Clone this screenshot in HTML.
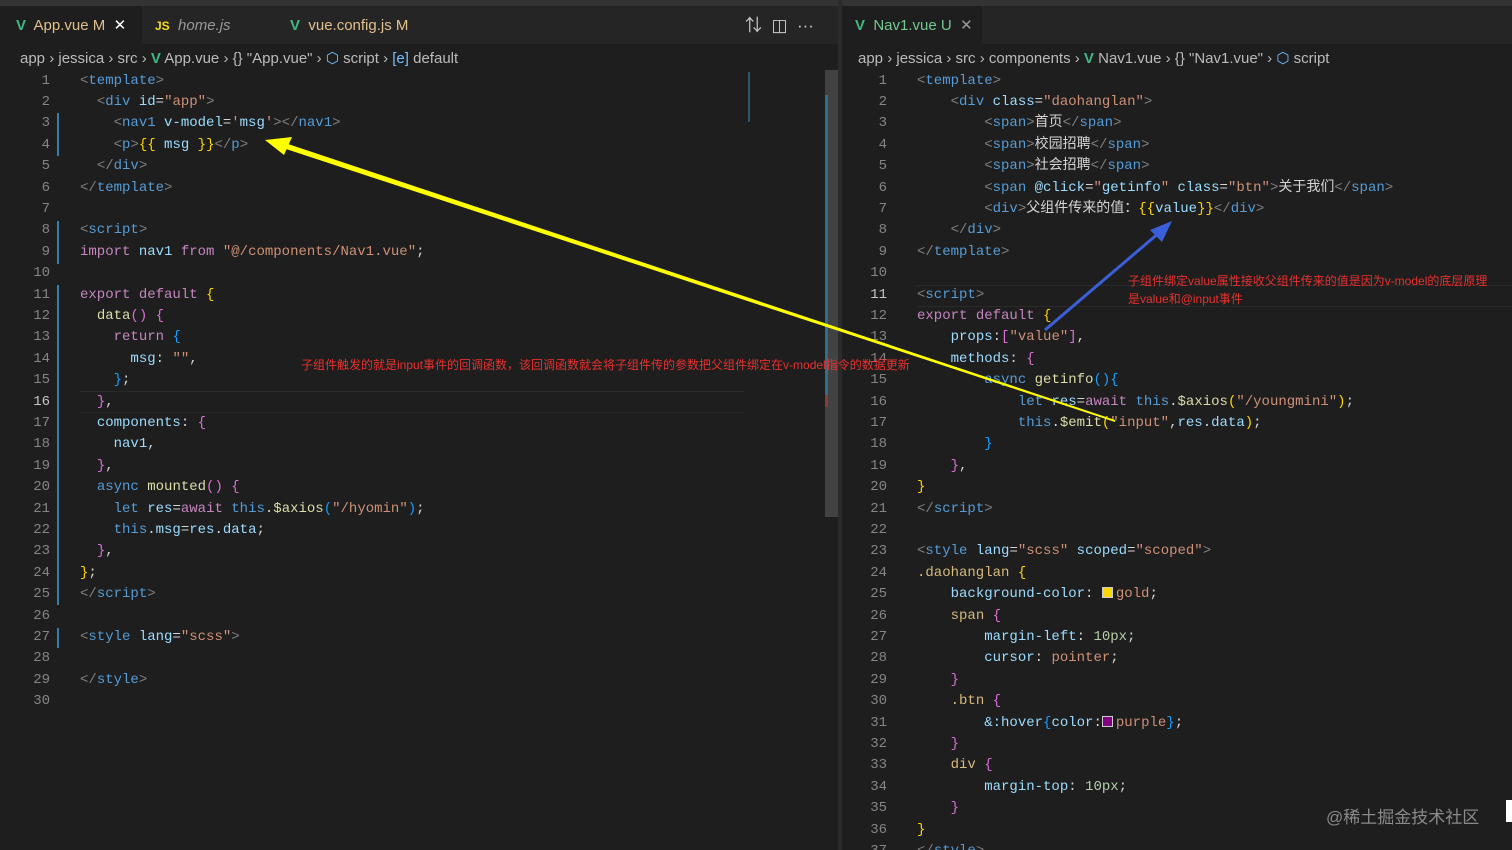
<!DOCTYPE html>
<html style="overflow:hidden"><head><meta charset="utf-8"><style>
*{margin:0;padding:0;box-sizing:border-box}
body{width:1512px;height:850px;background:#1e1e1e;overflow:hidden;position:relative;font-family:"Liberation Mono","Noto Sans CJK SC",monospace;}
.top{position:absolute;left:0;top:0;width:1512px;height:8px;background:#333}
.tabbar{position:absolute;top:6px;height:38px;background:#252526}
.tab{position:absolute;top:6px;height:38px;font-family:"Liberation Sans","Noto Sans CJK SC",sans-serif;font-size:15px;line-height:40px;color:#999}
.crumb{position:absolute;top:49px;font-family:"Liberation Sans","Noto Sans CJK SC",sans-serif;font-size:15px;color:#bbb;white-space:pre}
.ln{position:absolute;font-size:14px;color:#858585;text-align:right;width:30px;line-height:21.4px;height:21.4px}
.cl{position:absolute;font-size:14px;line-height:21.4px;height:21.4px;white-space:pre;color:#d4d4d4}
.p{color:#808080}.t{color:#569cd6}.a{color:#9cdcfe}.s{color:#ce9178}.k{color:#c586c0}.f{color:#dcdcaa}
.g{color:#ffd700}.pu{color:#da70d6}.b{color:#179fff}.v{color:#9cdcfe}.n{color:#b5cea8}.sel{color:#d7ba7d}
.vue{color:#41b883;font-weight:bold}
.red{position:absolute;color:#e8312f;font-family:"Liberation Sans","Noto Sans CJK SC",sans-serif;font-size:12px;white-space:nowrap}
.sw{display:inline-block;width:11px;height:11px;border:1px solid #ccc;vertical-align:-1px;margin-right:3px}
</style></head><body>
<div class="top"></div>
<div class="tabbar" style="left:0;width:838px"></div>
<div class="tabbar" style="left:842px;width:670px"></div>
<div style="position:absolute;left:0;top:6px;width:142px;height:38px;background:#1e1e1e"></div>
<div class="tab" style="left:16px;color:#e2c08d"><span class="vue">V</span>&nbsp; App.vue M&nbsp; <span style="color:#fff">✕</span></div>
<div class="tab" style="left:155px;font-style:italic"><span style="color:#f5de19;font-style:normal;font-weight:bold;font-size:12px">JS</span>&nbsp; home.js</div>
<div class="tab" style="left:290px;color:#e2c08d"><span class="vue">V</span>&nbsp; vue.config.js M</div>
<div class="tab" style="left:745px;color:#ccc;font-size:17px">⇅&nbsp; ◫&nbsp; ···</div>
<div style="position:absolute;left:842px;top:6px;width:140px;height:38px;background:#1e1e1e"></div>
<div class="tab" style="left:855px;color:#73c991"><span class="vue">V</span>&nbsp; Nav1.vue U&nbsp; <span style="color:#999">✕</span></div>
<div class="crumb" style="left:20px">app › jessica › src › <span class="vue">V</span> App.vue › {} "App.vue" › <span style="color:#75beff">⬡</span> script › <span style="color:#75beff">[e]</span> default</div>
<div class="crumb" style="left:858px">app › jessica › src › components › <span class="vue">V</span> Nav1.vue › {} "Nav1.vue" › <span style="color:#75beff">⬡</span> script</div>
<div style="position:absolute;left:838px;top:0;width:4px;height:850px;background:#2b2b2b"></div>
<div style="position:absolute;left:825px;top:70px;width:13px;height:447px;background:#424242"></div>
<div style="position:absolute;left:825px;top:95px;width:3px;height:300px;background:#2f6f8c"></div>
<div style="position:absolute;left:825px;top:395px;width:3px;height:12px;background:#8b3a3a"></div>
<div style="position:absolute;left:748px;top:72px;width:40px;height:50px;border-left:2px solid #3a7ca5;opacity:.6"></div>
<div style="position:absolute;left:80px;top:391px;width:665px;height:22px;border-top:1px solid #2a2a2a;border-bottom:1px solid #2a2a2a"></div>
<div style="position:absolute;left:917px;top:285px;width:595px;height:22px;border-top:1px solid #2a2a2a;border-bottom:1px solid #2a2a2a"></div>
<div style="position:absolute;left:57px;top:113px;width:2px;height:43px;background:#3a7ca5"></div>
<div style="position:absolute;left:57px;top:221px;width:2px;height:43px;background:#3a7ca5"></div>
<div style="position:absolute;left:57px;top:285px;width:2px;height:320px;background:#3a7ca5"></div>
<div style="position:absolute;left:57px;top:628px;width:2px;height:20px;background:#3a7ca5"></div>

<div id="L"></div>
<script>
const left=[
'<span class="p">&lt;</span><span class="t">template</span><span class="p">&gt;</span>',
'  <span class="p">&lt;</span><span class="t">div</span> <span class="a">id</span>=<span class="s">"app"</span><span class="p">&gt;</span>',
'    <span class="p">&lt;</span><span class="t">nav1</span> <span class="a">v-model</span>=<span class="s">\'</span><span class="a">msg</span><span class="s">\'</span><span class="p">&gt;&lt;/</span><span class="t">nav1</span><span class="p">&gt;</span>',
'    <span class="p">&lt;</span><span class="t">p</span><span class="p">&gt;</span><span class="g">{{</span> <span class="v">msg</span> <span class="g">}}</span><span class="p">&lt;/</span><span class="t">p</span><span class="p">&gt;</span>',
'  <span class="p">&lt;/</span><span class="t">div</span><span class="p">&gt;</span>',
'<span class="p">&lt;/</span><span class="t">template</span><span class="p">&gt;</span>',
'',
'<span class="p">&lt;</span><span class="t">script</span><span class="p">&gt;</span>',
'<span class="k">import</span> <span class="v">nav1</span> <span class="k">from</span> <span class="s">"@/components/Nav1.vue"</span>;',
'',
'<span class="k">export</span> <span class="k">default</span> <span class="g">{</span>',
'  <span class="f">data</span><span class="pu">()</span> <span class="pu">{</span>',
'    <span class="k">return</span> <span class="b">{</span>',
'      <span class="v">msg</span>: <span class="s">""</span>,',
'    <span class="b">}</span>;',
'  <span class="pu">}</span>,',
'  <span class="v">components</span>: <span class="pu">{</span>',
'    <span class="v">nav1</span>,',
'  <span class="pu">}</span>,',
'  <span class="t">async</span> <span class="f">mounted</span><span class="pu">()</span> <span class="pu">{</span>',
'    <span class="t">let</span> <span class="v">res</span>=<span class="k">await</span> <span class="t">this</span>.<span class="f">$axios</span><span class="b">(</span><span class="s">"/hyomin"</span><span class="b">)</span>;',
'    <span class="t">this</span>.<span class="v">msg</span>=<span class="v">res</span>.<span class="v">data</span>;',
'  <span class="pu">}</span>,',
'<span class="g">}</span>;',
'<span class="p">&lt;/</span><span class="t">script</span><span class="p">&gt;</span>',
'',
'<span class="p">&lt;</span><span class="t">style</span> <span class="a">lang</span>=<span class="s">"scss"</span><span class="p">&gt;</span>',
'',
'<span class="p">&lt;/</span><span class="t">style</span><span class="p">&gt;</span>',
''];
const right=[
'<span class="p">&lt;</span><span class="t">template</span><span class="p">&gt;</span>',
'    <span class="p">&lt;</span><span class="t">div</span> <span class="a">class</span>=<span class="s">"daohanglan"</span><span class="p">&gt;</span>',
'        <span class="p">&lt;</span><span class="t">span</span><span class="p">&gt;</span>首页<span class="p">&lt;/</span><span class="t">span</span><span class="p">&gt;</span>',
'        <span class="p">&lt;</span><span class="t">span</span><span class="p">&gt;</span>校园招聘<span class="p">&lt;/</span><span class="t">span</span><span class="p">&gt;</span>',
'        <span class="p">&lt;</span><span class="t">span</span><span class="p">&gt;</span>社会招聘<span class="p">&lt;/</span><span class="t">span</span><span class="p">&gt;</span>',
'        <span class="p">&lt;</span><span class="t">span</span> <span class="a">@click</span>=<span class="s">"</span><span class="a">getinfo</span><span class="s">"</span> <span class="a">class</span>=<span class="s">"btn"</span><span class="p">&gt;</span>关于我们<span class="p">&lt;/</span><span class="t">span</span><span class="p">&gt;</span>',
'        <span class="p">&lt;</span><span class="t">div</span><span class="p">&gt;</span>父组件传来的值：<span class="g">{{</span><span class="v">value</span><span class="g">}}</span><span class="p">&lt;/</span><span class="t">div</span><span class="p">&gt;</span>',
'    <span class="p">&lt;/</span><span class="t">div</span><span class="p">&gt;</span>',
'<span class="p">&lt;/</span><span class="t">template</span><span class="p">&gt;</span>',
'',
'<span class="p">&lt;</span><span class="t">script</span><span class="p">&gt;</span>',
'<span class="k">export</span> <span class="k">default</span> <span class="g">{</span>',
'    <span class="v">props</span>:<span class="pu">[</span><span class="s">"value"</span><span class="pu">]</span>,',
'    <span class="v">methods</span>: <span class="pu">{</span>',
'        <span class="t">async</span> <span class="f">getinfo</span><span class="b">(){</span>',
'            <span class="t">let</span> <span class="v">res</span>=<span class="k">await</span> <span class="t">this</span>.<span class="f">$axios</span><span class="g">(</span><span class="s">"/youngmini"</span><span class="g">)</span>;',
'            <span class="t">this</span>.<span class="f">$emit</span><span class="g">(</span><span class="s">"input"</span>,<span class="v">res</span>.<span class="v">data</span><span class="g">)</span>;',
'        <span class="b">}</span>',
'    <span class="pu">}</span>,',
'<span class="g">}</span>',
'<span class="p">&lt;/</span><span class="t">script</span><span class="p">&gt;</span>',
'',
'<span class="p">&lt;</span><span class="t">style</span> <span class="a">lang</span>=<span class="s">"scss"</span> <span class="a">scoped</span>=<span class="s">"scoped"</span><span class="p">&gt;</span>',
'<span class="sel">.daohanglan</span> <span class="g">{</span>',
'    <span class="a">background-color</span>: <span class="sw" style="background:gold"></span><span class="s">gold</span>;',
'    <span class="sel">span</span> <span class="pu">{</span>',
'        <span class="a">margin-left</span>: <span class="n">10px</span>;',
'        <span class="a">cursor</span>: <span class="s">pointer</span>;',
'    <span class="pu">}</span>',
'    <span class="sel">.btn</span> <span class="pu">{</span>',
'        <span class="a">&amp;:hover</span><span class="b">{</span><span class="a">color</span>:<span class="sw" style="background:purple"></span><span class="s">purple</span><span class="b">}</span>;',
'    <span class="pu">}</span>',
'    <span class="sel">div</span> <span class="pu">{</span>',
'        <span class="a">margin-top</span>: <span class="n">10px</span>;',
'    <span class="pu">}</span>',
'<span class="g">}</span>',
'<span class="p">&lt;/</span><span class="t">style</span><span class="p">&gt;</span>'];
let h='';
left.forEach((c,i)=>{const top=70.5+i*21.4;h+=`<div class="ln" style="left:20px;top:${top}px;${i==15?'color:#c6c6c6':''}">${i+1}</div><div class="cl" style="left:80px;top:${top}px">${c}</div>`});
right.forEach((c,i)=>{const top=70.5+i*21.4;h+=`<div class="ln" style="left:857px;top:${top}px;${i==10?'color:#c6c6c6':''}">${i+1}</div><div class="cl" style="left:917px;top:${top}px">${c}</div>`});
document.getElementById('L').innerHTML=h;
</script>
<div class="red" style="left:301px;top:356px">子组件触发的就是input事件的回调函数，该回调函数就会将子组件传的参数把父组件绑定在v-model指令的数据更新</div>
<div class="red" style="left:1128px;top:272px">子组件绑定value属性接收父组件传来的值是因为v-model的底层原理</div>
<div class="red" style="left:1128px;top:290px">是value和@input事件</div>
<svg style="position:absolute;left:0;top:0" width="1512" height="850">
<polygon points="285,143 1115,420 1115,422 283,148" fill="#ffff00"/>
<polygon points="265,140 292,137 284,155" fill="#ffff00"/>
<line x1="1045" y1="330" x2="1160" y2="232" stroke="#3a5fd9" stroke-width="3"/>
<polygon points="1172,221 1150,230 1162,242" fill="#3a5fd9"/>
</svg>
<div style="position:absolute;left:1326px;top:803px;font-family:'Liberation Sans','Noto Sans CJK SC',sans-serif;font-size:17px;color:#8a8a8a">@稀土掘金技术社区</div>
<div style="position:absolute;left:1506px;top:800px;width:6px;height:22px;background:#fff"></div>
</body></html>
